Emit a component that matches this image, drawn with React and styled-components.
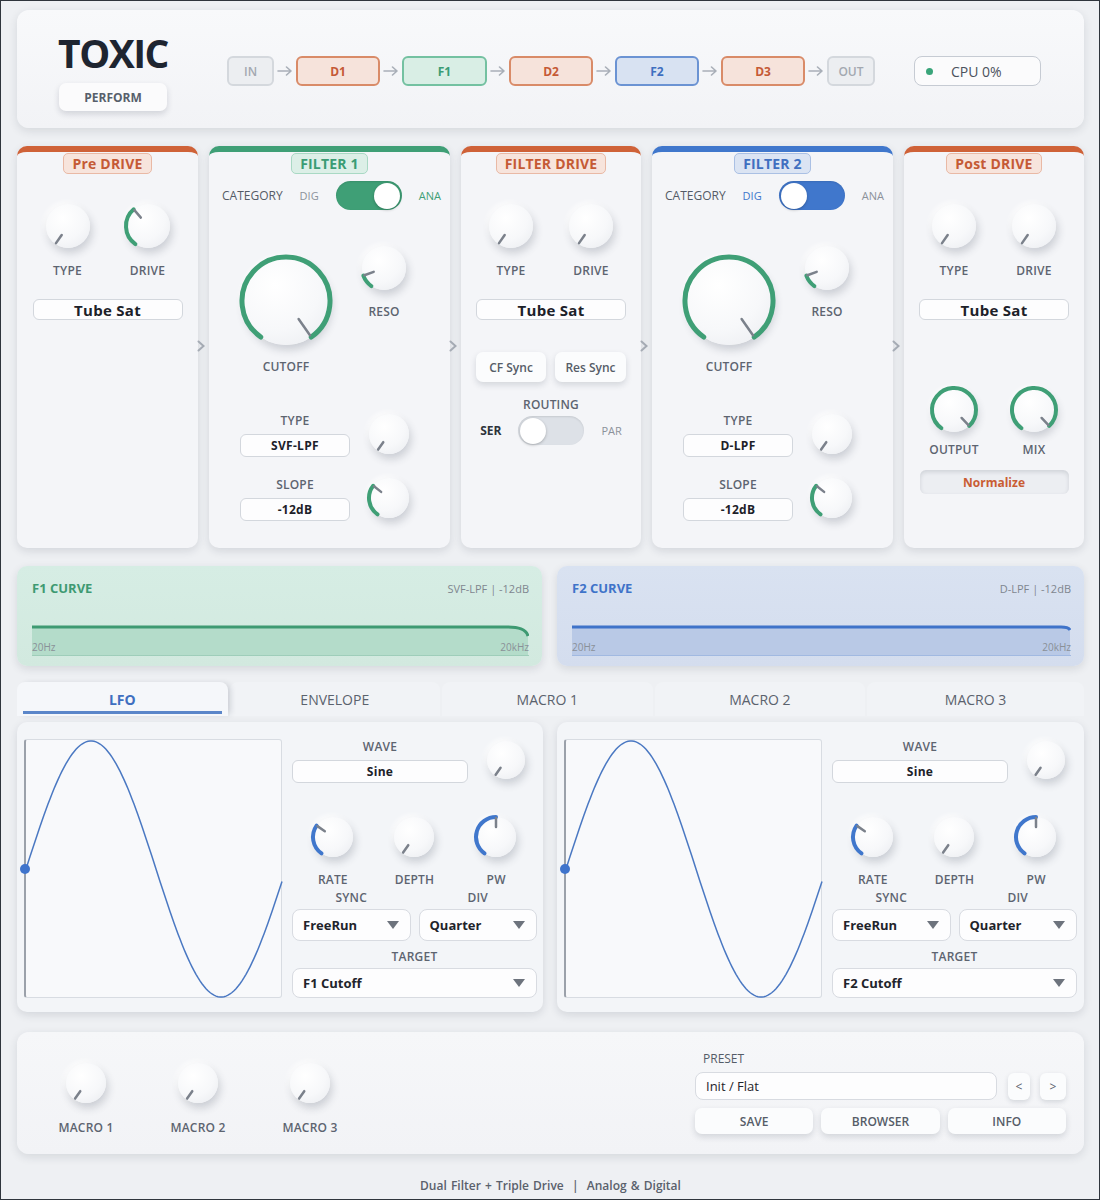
import React from "react";
import styled, { createGlobalStyle } from "styled-components";

const GREEN = "#3f9f76";
const BLUE = "#4077cc";
const ORANGE = "#cf6238";

const GlobalStyle = createGlobalStyle`
  * { box-sizing: border-box; }
  body {
    margin: 0;
    background: #eceef1;
    font-family: "Open Sans", "Noto Sans", sans-serif;
  }
`;

const Frame = styled.div`
  width: 1100px;
  height: 1200px;
  border: 1px solid #2f353c;
  background: #eef0f3;
  padding: 9px 15px 0 16px;
  display: flex;
  flex-direction: column;
`;

/* ---------- header ---------- */

const Header = styled.header`
  height: 118px;
  flex: none;
  background: linear-gradient(180deg, #f8f9fb, #f2f3f6);
  border-radius: 12px;
  box-shadow: 0 3px 10px rgba(30, 40, 60, 0.12);
  display: flex;
  align-items: center;
  padding: 4px 43px 0 42px;
`;

const Brand = styled.div`
  width: 108px;
  display: flex;
  flex-direction: column;
  align-items: center;
`;

const Logo = styled.div`
  font-size: 39px;
  line-height: 44px;
  font-weight: 700;
  letter-spacing: -1.5px;
  color: #1e2530;
`;

const PerformButton = styled.div`
  margin-top: 8px;
  width: 108px;
  height: 28px;
  border-radius: 7px;
  background: #fbfbfc;
  box-shadow: 0 3px 6px rgba(30, 40, 60, 0.16);
  display: flex;
  align-items: center;
  justify-content: center;
  font-size: 12px;
  font-weight: 700;
  color: #575f6b;
`;

const Chain = styled.div`
  margin-left: 60px;
  display: flex;
  align-items: center;
`;

const chainTones = {
  io: { bg: "#eceef1", border: "#d4d8dd", text: "#a3a8b0", w: 47 },
  drive: { bg: "#f6e3db", border: "#d98b68", text: "#c55a35", w: 84 },
  f1: { bg: "#d9eee5", border: "#74c1a1", text: "#3a9c74", w: 85 },
  f2: { bg: "#d8e2f2", border: "#6b93d3", text: "#3f6fc0", w: 84 },
};

const ChainBox = styled.div`
  width: ${(p) => p.$w || chainTones[p.$tone].w}px;
  height: 30px;
  border-radius: 6px;
  background: ${(p) => chainTones[p.$tone].bg};
  border: 2px solid ${(p) => chainTones[p.$tone].border};
  color: ${(p) => chainTones[p.$tone].text};
  display: flex;
  align-items: center;
  justify-content: center;
  font-size: 12px;
  font-weight: ${(p) => (p.$tone === "io" ? 600 : 700)};
`;

const ChainArrow = () => (
  <svg width="16" height="10" viewBox="0 0 16 10" style={{ margin: "0 3px" }}>
    <path
      d="M1 5 H14 M9.5 1 L14 5 L9.5 9"
      fill="none"
      stroke="#a9afb8"
      strokeWidth="1.6"
      strokeLinecap="round"
      strokeLinejoin="round"
    />
  </svg>
);

const CpuBox = styled.div`
  margin-left: auto;
  width: 127px;
  height: 30px;
  border-radius: 8px;
  border: 1.5px solid #c6cbd3;
  background: #fbfbfc;
  display: flex;
  align-items: center;
  padding-left: 11px;
  gap: 18px;
  font-size: 14px;
  font-weight: 500;
  color: #4b525d;
`;

const Dot = styled.span`
  width: 7px;
  height: 7px;
  border-radius: 50%;
  background: #3aa57a;
`;

/* ---------- knob ---------- */

const KnobWrap = styled.div`
  position: relative;
  flex: none;
  width: ${(p) => p.$size}px;
  height: ${(p) => p.$size}px;
`;

const KnobDisc = styled.div`
  position: absolute;
  inset: ${(p) => p.$inset}px;
  border-radius: 50%;
  background: radial-gradient(circle at 38% 32%, #ffffff 0%, #f7f8fa 55%, #e9ebef 100%);
  box-shadow: 2px 5px 9px rgba(40, 50, 70, 0.2), -2px -2px 5px rgba(255, 255, 255, 0.9);
`;

const KnobFace = styled.svg`
  position: absolute;
  inset: 0;
  overflow: visible;
`;

const polar = (c, r, deg) => {
  const a = (deg * Math.PI) / 180;
  return [c + r * Math.sin(a), c - r * Math.cos(a)];
};

const arcPath = (c, r, a0, a1) => {
  const [x0, y0] = polar(c, r, a0);
  const [x1, y1] = polar(c, r, a1);
  const large = a1 - a0 > 180 ? 1 : 0;
  return `M${x0} ${y0} A${r} ${r} 0 ${large} 1 ${x1} ${y1}`;
};

const Knob = ({ size = 46, disc = 40, value = 0, color, stroke = 4 }) => {
  const c = size / 2;
  const r = disc / 2;
  const angle = -145 + 290 * value;
  const [px0, py0] = polar(c, r * 0.5, angle);
  const [px1, py1] = polar(c, r * 0.95, angle);
  return (
    <KnobWrap $size={size}>
      <KnobDisc $inset={(size - disc) / 2} />
      <KnobFace width={size} height={size}>
        {color && value > 0.01 && (
          <path
            d={arcPath(c, r, -145, angle)}
            fill="none"
            stroke={color}
            strokeWidth={stroke}
            strokeLinecap="round"
          />
        )}
        <line
          x1={px0}
          y1={py0}
          x2={px1}
          y2={py1}
          stroke="#7b818b"
          strokeWidth="2.5"
          strokeLinecap="round"
        />
      </KnobFace>
    </KnobWrap>
  );
};

const Label = styled.div`
  font-size: 12px;
  line-height: 14px;
  font-weight: 600;
  color: #5d6470;
  letter-spacing: 0.2px;
  white-space: nowrap;
  margin-top: ${(p) => p.$mt || 0}px;
`;

const KnobCell = styled.div`
  width: ${(p) => p.$w || 50}px;
  display: flex;
  flex-direction: column;
  align-items: center;
  padding-top: ${(p) => p.$pt || 0}px;
`;

/* ---------- modules ---------- */

const ModuleRow = styled.div`
  margin-top: 18px;
  height: 402px;
  flex: none;
  display: grid;
  grid-template-columns: 181px 241px 180px 241px 1fr;
  column-gap: 11px;
`;

const Module = styled.section`
  position: relative;
  background: #f4f5f8;
  border-top: 6px solid ${(p) => p.$accent};
  border-radius: 10px;
  box-shadow: 0 3px 8px rgba(30, 40, 60, 0.13);
  display: flex;
  flex-direction: column;
  align-items: center;
`;

const NextArrow = styled.svg`
  position: absolute;
  right: -7px;
  top: 188px;
`;

const Chevron = () => (
  <NextArrow width="8" height="12" viewBox="0 0 8 12">
    <path d="M1.5 1.5 L6.5 6 L1.5 10.5" fill="none" stroke="#a6acb5" strokeWidth="2" strokeLinecap="round" />
  </NextArrow>
);

const badgeTones = {
  orange: { bg: "#f7e4dc", border: "#e9b9a5", text: "#c55a35" },
  green: { bg: "#dcefe7", border: "#a9d9c4", text: "#3a9c74" },
  blue: { bg: "#dbe4f3", border: "#aac0e4", text: "#3f6fc0" },
};

const Badge = styled.div`
  margin-top: 1px;
  height: 21px;
  padding: 0 8px;
  border-radius: 5px;
  background: ${(p) => badgeTones[p.$tone].bg};
  border: 1px solid ${(p) => badgeTones[p.$tone].border};
  color: ${(p) => badgeTones[p.$tone].text};
  display: flex;
  align-items: center;
  font-size: 14px;
  font-weight: 700;
  letter-spacing: 0.2px;
`;

const KnobPair = styled.div`
  display: flex;
  gap: 30px;
  margin-top: ${(p) => p.$mt}px;
`;

const ValueBox = styled.div`
  width: ${(p) => p.$w}px;
  height: ${(p) => p.$h || 21}px;
  flex: none;
  background: #fdfdfe;
  border: 1px solid #d3d7dd;
  border-radius: 6px;
  display: flex;
  align-items: center;
  justify-content: center;
  font-size: ${(p) => p.$fs || 12}px;
  font-weight: 700;
  color: #1c2129;
  margin-top: ${(p) => p.$mt || 0}px;
  letter-spacing: 0.3px;
`;

const CategoryRow = styled.div`
  align-self: stretch;
  height: 29px;
  margin-top: 7px;
  padding-left: 13px;
  display: flex;
  align-items: center;
  gap: 17px;
`;

const SmallText = styled.span`
  font-size: ${(p) => p.$fs || 11}px;
  font-weight: ${(p) => p.$fw || 500};
  color: ${(p) => p.$color || "#8c929b"};
  white-space: nowrap;
`;

const Toggle = styled.div`
  width: 66px;
  height: 29px;
  flex: none;
  border-radius: 15px;
  background: ${(p) => p.$color};
  display: flex;
  align-items: center;
  justify-content: ${(p) => (p.$on ? "flex-end" : "flex-start")};
  padding: 0 2px;
  box-shadow: inset 0 1px 2px rgba(0, 0, 0, 0.1);
`;

const Thumb = styled.div`
  width: 26px;
  height: 26px;
  border-radius: 50%;
  background: #ffffff;
  box-shadow: 0 1px 3px rgba(0, 0, 0, 0.25);
`;

const CutoffRow = styled.div`
  align-self: stretch;
  display: flex;
  align-items: flex-start;
  padding-left: 30px;
  gap: 26px;
  margin-top: 33px;
`;

const ParamRow = styled.div`
  align-self: stretch;
  display: flex;
  align-items: flex-end;
  padding-left: 31px;
  gap: 16px;
  margin-top: ${(p) => p.$mt}px;
`;

const ParamCol = styled.div`
  width: 110px;
  display: flex;
  flex-direction: column;
  align-items: center;
  gap: 6px;
`;

const SyncRow = styled.div`
  display: flex;
  gap: 9px;
  margin-top: 32px;
`;

const SoftButton = styled.div`
  width: ${(p) => p.$w}px;
  height: ${(p) => p.$h || 30}px;
  flex: ${(p) => (p.$w ? "none" : 1)};
  border-radius: 7px;
  background: #fbfcfd;
  box-shadow: 0 3px 6px rgba(30, 40, 60, 0.15);
  display: flex;
  align-items: center;
  justify-content: center;
  font-size: 12px;
  font-weight: 600;
  color: #565d68;
`;

const RoutingRow = styled.div`
  display: flex;
  align-items: center;
  gap: 17px;
  margin-top: 4px;
`;

const Normalize = styled.div`
  width: 149px;
  height: 24px;
  margin-top: 13px;
  border-radius: 6px;
  background: #eceef2;
  box-shadow: inset 0 2px 4px rgba(30, 40, 60, 0.14);
  display: flex;
  align-items: center;
  justify-content: center;
  font-size: 12px;
  font-weight: 700;
  color: #c95d34;
`;

const DriveModule = ({ title, children, last }) => (
  <Module $accent={ORANGE}>
    <Badge $tone="orange">{title}</Badge>
    <KnobPair $mt={27}>
      <KnobCell>
        <Knob size={50} disc={44} value={0} />
        <Label $mt={13}>TYPE</Label>
      </KnobCell>
      <KnobCell>
        <Knob size={50} disc={44} value={title === "Pre DRIVE" ? 0.36 : 0} color={GREEN} />
        <Label $mt={13}>DRIVE</Label>
      </KnobCell>
    </KnobPair>
    <ValueBox $w={150} $fs={15} $mt={21}>
      Tube Sat
    </ValueBox>
    {children}
    {!last && <Chevron />}
  </Module>
);

const FilterModule = ({ title, tone, color, analog, type }) => (
  <Module $accent={color}>
    <Badge $tone={tone}>{title}</Badge>
    <CategoryRow>
      <SmallText $fs={12} $color="#545b66">
        CATEGORY
      </SmallText>
      <SmallText $color={analog ? "#8c929b" : color}>DIG</SmallText>
      <Toggle $color={color} $on={analog}>
        <Thumb />
      </Toggle>
      <SmallText $color={analog ? color : "#8c929b"}>ANA</SmallText>
    </CategoryRow>
    <CutoffRow>
      <KnobCell $w={94} $pt={11}>
        <Knob size={94} disc={88} value={1} color={GREEN} stroke={5} />
        <Label $mt={12}>CUTOFF</Label>
      </KnobCell>
      <KnobCell>
        <Knob size={50} disc={44} value={0.12} color={GREEN} />
        <Label $mt={12}>RESO</Label>
      </KnobCell>
    </CutoffRow>
    <ParamRow $mt={37}>
      <ParamCol>
        <Label>TYPE</Label>
        <ValueBox $w={110} $h={23}>
          {type}
        </ValueBox>
      </ParamCol>
      <Knob size={46} disc={40} value={0} />
    </ParamRow>
    <ParamRow $mt={18}>
      <ParamCol>
        <Label>SLOPE</Label>
        <ValueBox $w={110} $h={23}>
          -12dB
        </ValueBox>
      </ParamCol>
      <Knob size={46} disc={40} value={0.32} color={GREEN} />
    </ParamRow>
    <Chevron />
  </Module>
);

/* ---------- curves ---------- */

const CurveRow = styled.div`
  margin-top: 18px;
  height: 100px;
  flex: none;
  display: grid;
  grid-template-columns: 525px 1fr;
  column-gap: 15px;
`;

const CurvePanel = styled.div`
  border-radius: 10px;
  background: ${(p) => p.$bg};
  box-shadow: 0 3px 8px rgba(30, 40, 60, 0.12);
  padding: 14px 13px 0 15px;
  display: flex;
  flex-direction: column;
`;

const CurveHead = styled.div`
  height: 16px;
  display: flex;
  align-items: center;
  justify-content: space-between;
`;

const CurveTitle = styled.span`
  font-size: 13px;
  font-weight: 700;
  color: ${(p) => p.$color};
`;

const CurveInfo = styled.span`
  font-size: 11px;
  color: #7f868f;
`;

const Graph = styled.div`
  position: relative;
  margin-top: 28px;
  height: 32px;
  display: flex;
  align-items: flex-end;
  justify-content: space-between;
  padding-bottom: 3px;
`;

const GraphShape = styled.svg`
  position: absolute;
  inset: 0;
  width: 100%;
  height: 100%;
`;

const HzText = styled.span`
  position: relative;
  font-size: 10px;
  line-height: 12px;
  color: #8a9098;
`;

const CurveCard = ({ title, info, bg, line, fill, bend }) => {
  const path = bend
    ? "M0 3 L476 3 C490 3 497 5 499 12"
    : "M0 3 L490 3 C495 3 498 4 499 6";
  return (
    <CurvePanel $bg={bg}>
      <CurveHead>
        <CurveTitle $color={line}>{title}</CurveTitle>
        <CurveInfo>{info}</CurveInfo>
      </CurveHead>
      <Graph>
        <GraphShape viewBox="0 0 500 32" preserveAspectRatio="none">
          <path d={`${path} L499 31 L0 31 Z`} fill={fill} />
          <line x1="0" y1="31.5" x2="500" y2="31.5" stroke={line} strokeOpacity="0.35" strokeWidth="1" />
          <path d={path} fill="none" stroke={line} strokeWidth="3" vectorEffect="non-scaling-stroke" />
        </GraphShape>
        <HzText>20Hz</HzText>
        <HzText>20kHz</HzText>
      </Graph>
    </CurvePanel>
  );
};

/* ---------- tabs + lfo ---------- */

const TabBar = styled.div`
  margin-top: 16px;
  height: 34px;
  flex: none;
  display: flex;
  gap: 2px;
`;

const Tab = styled.div`
  flex: ${(p) => p.$grow || 1};
  position: relative;
  border-radius: 8px 8px 0 0;
  background: ${(p) => (p.$active ? "#f5f7fa" : "#f1f3f6")};
  box-shadow: ${(p) => (p.$active ? "4px 0 6px -2px rgba(30,40,60,0.18)" : "none")};
  z-index: ${(p) => (p.$active ? 1 : 0)};
  display: flex;
  align-items: center;
  justify-content: center;
  font-size: 14px;
  font-weight: ${(p) => (p.$active ? 700 : 400)};
  color: ${(p) => (p.$active ? "#3f6fc0" : "#5b626d")};
  &::after {
    content: "";
    display: ${(p) => (p.$active ? "block" : "none")};
    position: absolute;
    left: 6px;
    right: 6px;
    bottom: 2px;
    height: 3px;
    background: #5b86c9;
  }
`;

const LfoRow = styled.div`
  margin-top: 6px;
  height: 290px;
  flex: none;
  display: grid;
  grid-template-columns: 526px 1fr;
  column-gap: 14px;
`;

const LfoPanel = styled.div`
  border-radius: 10px;
  background: #f3f5f8;
  box-shadow: 0 3px 8px rgba(30, 40, 60, 0.13);
  padding: 17px 6px 0 7px;
  display: flex;
  gap: 10px;
`;

const WaveView = styled.div`
  width: 258px;
  height: 259px;
  flex: none;
  background: #f8f9fb;
  border: 1px solid #d8dce2;
  border-left: 2px solid #9ba1aa;
  border-radius: 3px;
`;

const Controls = styled.div`
  width: 245px;
  margin-top: -2px;
  display: flex;
  flex-direction: column;
`;

const WaveRow = styled.div`
  display: flex;
  align-items: flex-end;
  gap: 15px;
`;

const WaveCol = styled.div`
  width: 176px;
  display: flex;
  flex-direction: column;
  align-items: center;
  gap: 6px;
`;

const Triple = styled.div`
  margin-top: 31px;
  display: grid;
  grid-template-columns: repeat(3, 1fr);
  justify-items: center;
`;

const Pair = styled.div`
  display: grid;
  grid-template-columns: 1fr 1fr;
  column-gap: 8px;
`;

const DropCol = styled.div`
  display: flex;
  flex-direction: column;
  align-items: center;
`;

const Dropdown = styled.div`
  align-self: stretch;
  height: ${(p) => p.$h}px;
  margin-top: 4px;
  background: #fdfdfe;
  border: 1px solid #d8dbe1;
  border-radius: 8px;
  display: flex;
  align-items: center;
  justify-content: space-between;
  padding: 0 11px 0 10px;
  font-size: 13px;
  font-weight: 700;
  color: #1f242b;
`;

const Caret = () => (
  <svg width="12" height="8" viewBox="0 0 12 8">
    <path d="M0 0 H12 L6 8 Z" fill="#6d737d" />
  </svg>
);

const sinePath = (() => {
  const pts = [];
  for (let x = 0; x <= 257; x += 2) {
    const y = 129 - 128 * Math.sin((2 * Math.PI * x) / 260);
    pts.push(`${x === 0 ? "M" : "L"}${x.toFixed(1)} ${y.toFixed(1)}`);
  }
  return pts.join(" ");
})();

const SineWave = () => (
  <svg width="257" height="257" viewBox="0 0 257 257" style={{ display: "block", overflow: "visible" }}>
    <path d={sinePath} fill="none" stroke="#4a78c2" strokeWidth="1.5" />
    <circle cx="-1" cy="129" r="5" fill="#3f74cc" />
  </svg>
);

const LfoCard = ({ target }) => (
  <LfoPanel>
    <WaveView>
      <SineWave />
    </WaveView>
    <Controls>
      <WaveRow>
        <WaveCol>
          <Label>WAVE</Label>
          <ValueBox $w={176} $h={23}>
            Sine
          </ValueBox>
        </WaveCol>
        <Knob size={46} disc={38} value={0} />
      </WaveRow>
      <Triple>
        <KnobCell>
          <Knob size={46} disc={40} value={0.31} color={BLUE} />
          <Label $mt={13}>RATE</Label>
        </KnobCell>
        <KnobCell>
          <Knob size={46} disc={40} value={0} />
          <Label $mt={13}>DEPTH</Label>
        </KnobCell>
        <KnobCell>
          <Knob size={46} disc={40} value={0.5} color={BLUE} />
          <Label $mt={13}>PW</Label>
        </KnobCell>
      </Triple>
      <Pair>
        <DropCol>
          <Label $mt={4}>SYNC</Label>
          <Dropdown $h={32}>
            FreeRun
            <Caret />
          </Dropdown>
        </DropCol>
        <DropCol>
          <Label $mt={4}>DIV</Label>
          <Dropdown $h={32}>
            Quarter
            <Caret />
          </Dropdown>
        </DropCol>
      </Pair>
      <DropCol>
        <Label $mt={9}>TARGET</Label>
        <Dropdown $h={30}>
          {target}
          <Caret />
        </Dropdown>
      </DropCol>
    </Controls>
  </LfoPanel>
);

/* ---------- footer ---------- */

const BottomCard = styled.div`
  margin-top: 20px;
  height: 122px;
  flex: none;
  border-radius: 12px;
  background: linear-gradient(180deg, #f6f7f9, #f2f3f6);
  box-shadow: 0 3px 10px rgba(30, 40, 60, 0.12);
  display: flex;
  padding: 20px 18px 0 29px;
`;

const Macros = styled.div`
  display: flex;
  gap: 32px;
  padding-top: 8px;
`;

const Preset = styled.div`
  margin-left: auto;
  width: 371px;
  display: flex;
  flex-direction: column;
`;

const PresetLabel = styled.div`
  padding-left: 8px;
  font-size: 12px;
  line-height: 14px;
  font-weight: 500;
  color: #555c67;
`;

const PresetRow = styled.div`
  margin-top: 6px;
  display: flex;
  align-items: center;
`;

const PresetField = styled.div`
  width: 302px;
  height: 28px;
  border-radius: 8px;
  background: #fdfdfe;
  border: 1px solid #d8dbe1;
  display: flex;
  align-items: center;
  padding-left: 10px;
  font-size: 13px;
  font-weight: 500;
  color: #1f242b;
`;

const NavButton = styled.div`
  width: ${(p) => p.$w}px;
  height: 27px;
  margin-left: ${(p) => p.$ml}px;
  border-radius: 6px;
  background: #fbfcfd;
  box-shadow: 0 2px 5px rgba(30, 40, 60, 0.15);
  display: flex;
  align-items: center;
  justify-content: center;
  font-size: 12px;
  color: #5a616c;
`;

const ActionRow = styled.div`
  margin-top: 8px;
  display: flex;
  gap: 8px;
`;

const Caption = styled.div`
  margin-top: 25px;
  text-align: center;
  font-size: 12px;
  line-height: 14px;
  font-weight: 600;
  color: #5a616c;
  word-spacing: 1px;
`;

export default function App() {
  return (
    <>
      <GlobalStyle />
      <Frame>
        <Header>
          <Brand>
            <Logo>TOXIC</Logo>
            <PerformButton>PERFORM</PerformButton>
          </Brand>
          <Chain>
            <ChainBox $tone="io">IN</ChainBox>
            <ChainArrow />
            <ChainBox $tone="drive">D1</ChainBox>
            <ChainArrow />
            <ChainBox $tone="f1">F1</ChainBox>
            <ChainArrow />
            <ChainBox $tone="drive">D2</ChainBox>
            <ChainArrow />
            <ChainBox $tone="f2">F2</ChainBox>
            <ChainArrow />
            <ChainBox $tone="drive">D3</ChainBox>
            <ChainArrow />
            <ChainBox $tone="io" $w={48}>
              OUT
            </ChainBox>
          </Chain>
          <CpuBox>
            <Dot />
            CPU 0%
          </CpuBox>
        </Header>

        <ModuleRow>
          <DriveModule title="Pre DRIVE" />
          <FilterModule title="FILTER 1" tone="green" color={GREEN} analog type="SVF-LPF" />
          <DriveModule title="FILTER DRIVE">
            <SyncRow>
              <SoftButton $w={70}>CF Sync</SoftButton>
              <SoftButton $w={71}>Res Sync</SoftButton>
            </SyncRow>
            <Label $mt={16}>ROUTING</Label>
            <RoutingRow>
              <SmallText $fs={12} $fw={700} $color="#2d333b">
                SER
              </SmallText>
              <Toggle $color="#dde1e7">
                <Thumb />
              </Toggle>
              <SmallText>PAR</SmallText>
            </RoutingRow>
          </DriveModule>
          <FilterModule title="FILTER 2" tone="blue" color={BLUE} type="D-LPF" />
          <DriveModule title="Post DRIVE" last>
            <KnobPair $mt={65}>
              <KnobCell>
                <Knob size={50} disc={44} value={0.97} color={GREEN} />
                <Label $mt={8}>OUTPUT</Label>
              </KnobCell>
              <KnobCell>
                <Knob size={50} disc={44} value={0.97} color={GREEN} />
                <Label $mt={8}>MIX</Label>
              </KnobCell>
            </KnobPair>
            <Normalize>Normalize</Normalize>
          </DriveModule>
        </ModuleRow>

        <CurveRow>
          <CurveCard
            title="F1 CURVE"
            info="SVF-LPF  |  -12dB"
            bg="linear-gradient(180deg, #d6ede4, #d2e9df)"
            line="#3e9a72"
            fill="#b4dcca"
            bend
          />
          <CurveCard
            title="F2 CURVE"
            info="D-LPF  |  -12dB"
            bg="linear-gradient(180deg, #d9e2f1, #d4ddee)"
            line="#3f73c9"
            fill="#b9c9e6"
          />
        </CurveRow>

        <TabBar>
          <Tab $active>LFO</Tab>
          <Tab>ENVELOPE</Tab>
          <Tab>MACRO 1</Tab>
          <Tab>MACRO 2</Tab>
          <Tab $grow={1.03}>MACRO 3</Tab>
        </TabBar>

        <LfoRow>
          <LfoCard target="F1 Cutoff" />
          <LfoCard target="F2 Cutoff" />
        </LfoRow>

        <BottomCard>
          <Macros>
            {["MACRO 1", "MACRO 2", "MACRO 3"].map((m) => (
              <KnobCell key={m} $w={80}>
                <Knob size={46} disc={40} value={0} />
                <Label $mt={15}>{m}</Label>
              </KnobCell>
            ))}
          </Macros>
          <Preset>
            <PresetLabel>PRESET</PresetLabel>
            <PresetRow>
              <PresetField>Init / Flat</PresetField>
              <NavButton $w={22} $ml={11}>
                &lt;
              </NavButton>
              <NavButton $w={26} $ml={10}>
                &gt;
              </NavButton>
            </PresetRow>
            <ActionRow>
              <SoftButton $h={26}>SAVE</SoftButton>
              <SoftButton $h={26}>BROWSER</SoftButton>
              <SoftButton $h={26}>INFO</SoftButton>
            </ActionRow>
          </Preset>
        </BottomCard>

        <Caption>Dual Filter + Triple Drive &nbsp;|&nbsp; Analog &amp; Digital</Caption>
      </Frame>
    </>
  );
}
